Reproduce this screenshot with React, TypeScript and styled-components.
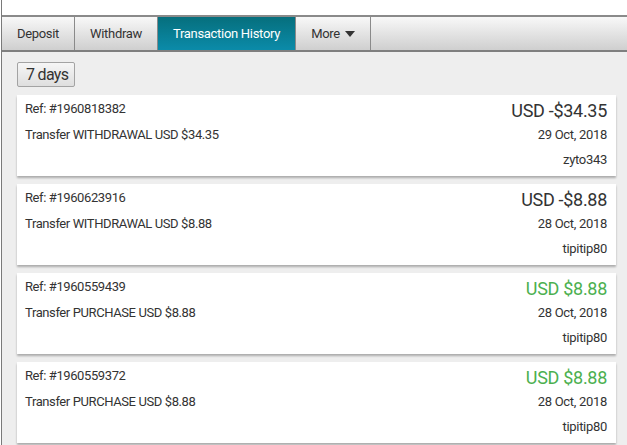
import styled, { createGlobalStyle } from "styled-components";

const GlobalStyle = createGlobalStyle`
  html, body {
    margin: 0;
    padding: 0;
    background: #ffffff;
    font-family: Roboto, "Liberation Sans", sans-serif;
  }
  * {
    box-sizing: border-box;
  }
`;

const Frame = styled.div`
  margin-left: 1px;
  border-left: 1px solid #7a7a7a;
  min-height: 445px;
  padding-top: 15px;
  background: #eeeeee;
  position: relative;
  &::before {
    content: "";
    display: block;
    position: absolute;
    top: 0;
    left: 0;
    right: 0;
    height: 15px;
    background: #ffffff;
  }
`;

const TabBar = styled.div`
  display: flex;
  height: 37px;
  border-top: 2px solid #8a8a8a;
  border-bottom: 2px solid #7f7f7f;
  background: linear-gradient(#f8f8f8, #cfcfcf);
`;

const Tab = styled.div<{ $active?: boolean; $width: number }>`
  width: ${(p) => p.$width}px;
  display: flex;
  align-items: center;
  justify-content: center;
  gap: 5px;
  font-size: 13px;
  letter-spacing: -0.3px;
  color: ${(p) => (p.$active ? "#ffffff" : "#333333")};
  border-right: 1px solid #8a8a8a;
  background: ${(p) =>
    p.$active ? "linear-gradient(#066f7d, #0b8ba9)" : "transparent"};
`;

const Caret = styled.svg`
  width: 10px;
  height: 6px;
  fill: #333333;
`;

const Body = styled.div`
  padding: 10px 11px 0 15px;
  display: flex;
  flex-direction: column;
  align-items: flex-start;
  gap: 8px;
`;

const RangeButton = styled.div`
  height: 25px;
  padding: 0 6px 0 8px;
  display: flex;
  align-items: center;
  font-size: 16px;
  letter-spacing: -0.7px;
  color: #333333;
  border: 1px solid #a3a3a3;
  border-radius: 2px;
  background: linear-gradient(#f6f6f6, #dedede);
`;

const Card = styled.div`
  align-self: stretch;
  height: 81px;
  background: #ffffff;
  box-shadow: 0 2px 2px rgba(0, 0, 0, 0.28);
  padding: 4px 9px 0 8px;
  display: flex;
  justify-content: space-between;
  color: #333333;
`;

const Left = styled.div`
  display: flex;
  flex-direction: column;
  gap: 6px;
  font-size: 13px;
  line-height: 20px;
  letter-spacing: -0.4px;
`;

const Right = styled.div`
  display: flex;
  flex-direction: column;
  align-items: flex-end;
  font-size: 13px;
  letter-spacing: -0.3px;
`;

const Amount = styled.div<{ $positive: boolean }>`
  font-size: 18px;
  line-height: 24px;
  color: ${(p) => (p.$positive ? "#4cb050" : "#333333")};
`;

const Meta = styled.div<{ $line: number }>`
  line-height: ${(p) => p.$line}px;
`;

const transactions = [
  { ref: "1960818382", type: "WITHDRAWAL", value: "34.35", date: "29 Oct, 2018", user: "zyto343" },
  { ref: "1960623916", type: "WITHDRAWAL", value: "8.88", date: "28 Oct, 2018", user: "tipitip80" },
  { ref: "1960559439", type: "PURCHASE", value: "8.88", date: "28 Oct, 2018", user: "tipitip80" },
  { ref: "1960559372", type: "PURCHASE", value: "8.88", date: "28 Oct, 2018", user: "tipitip80" },
];

function App() {
  return (
    <>
      <GlobalStyle />
      <Frame>
        <TabBar>
          <Tab $width={73}>Deposit</Tab>
          <Tab $width={83}>Withdraw</Tab>
          <Tab $width={138} $active>
            Transaction History
          </Tab>
          <Tab $width={75}>
            More
            <Caret viewBox="0 0 10 6">
              <path d="M0 0h10L5 6z" />
            </Caret>
          </Tab>
        </TabBar>
        <Body>
          <RangeButton>7 days</RangeButton>
          {transactions.map((t) => {
            const positive = t.type === "PURCHASE";
            return (
              <Card key={t.ref}>
                <Left>
                  <div>Ref: #{t.ref}</div>
                  <div>
                    Transfer {t.type} USD ${t.value}
                  </div>
                </Left>
                <Right>
                  <Amount $positive={positive}>
                    USD {positive ? "" : "-"}${t.value}
                  </Amount>
                  <Meta $line={24}>{t.date}</Meta>
                  <Meta $line={26}>{t.user}</Meta>
                </Right>
              </Card>
            );
          })}
        </Body>
      </Frame>
    </>
  );
}

export default App;
